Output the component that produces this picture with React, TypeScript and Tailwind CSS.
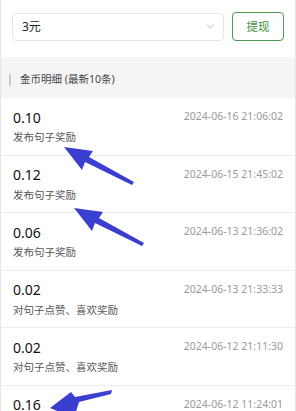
import { ChevronDown } from "lucide-react";

type Record = {
  amount: string;
  time: string;
  desc: string;
};

const records: Record[] = [
  { amount: "0.10", time: "2024-06-16 21:06:02", desc: "发布句子奖励" },
  { amount: "0.12", time: "2024-06-15 21:45:02", desc: "发布句子奖励" },
  { amount: "0.06", time: "2024-06-13 21:36:02", desc: "发布句子奖励" },
  { amount: "0.02", time: "2024-06-13 21:33:33", desc: "对句子点赞、喜欢奖励" },
  { amount: "0.02", time: "2024-06-12 21:11:30", desc: "对句子点赞、喜欢奖励" },
  { amount: "0.16", time: "2024-06-12 11:24:01", desc: "发布句子奖励" },
];

// ── Row ────────────────────────────────────────────────────────────────────
function RecordRow({ data }: { data: Record }) {
  return (
    <div className="h-[57.5px] shrink-0 border-b border-[#ececec] pl-[12px] pr-[12px] pt-[9px]">
      <div className="flex items-center justify-between h-[20px]">
        <span className="text-[14px] text-[#111]">{data.amount}</span>
        <span className="text-[10.5px] text-[#9a9a9a]">{data.time}</span>
      </div>
      <div className="text-[10.5px] text-[#555] leading-[18px] mt-[1px]">{data.desc}</div>
    </div>
  );
}

// ── Annotation arrows ──────────────────────────────────────────────────────
function Arrows() {
  return (
    <svg
      className="absolute inset-0 pointer-events-none"
      width="296"
      height="411"
      viewBox="0 0 296 411"
    >
      <polygon
        fill="#3b3fcf"
        points="63,147 92,151 88,157 133,182 131,185 84,162 81,170"
      />
      <polygon
        fill="#3b3fcf"
        points="73,208 102,212 98,218 143,243 141,246 94,223 91,231"
      />
      <polygon
        fill="#3b3fcf"
        points="49,408 70,392 74,397 111,390 110,394 78,402 73,418"
      />
    </svg>
  );
}

// ── Main ───────────────────────────────────────────────────────────────────
export default function App() {
  return (
    <div
      className="relative w-[296px] h-[411px] overflow-hidden bg-white border-x border-[#e6e6e6]"
      style={{ fontFamily: '"Noto Sans", "Noto Sans CJK SC", sans-serif' }}
    >
      {/* Withdraw bar */}
      <div className="flex items-center gap-[8px] h-[57px] pl-[11px] pr-[11px] pb-[4px]">
        <div className="flex-1 h-[28px] flex items-center justify-between rounded-[4px] border border-[#e6e6e6] pl-[9px] pr-[6px]">
          <span className="text-[12px] text-[#222]">3元</span>
          <ChevronDown size={13} strokeWidth={1.5} className="text-[#aaa]" />
        </div>
        <button className="w-[52px] h-[29px] rounded-[4px] border border-[#4f9a53] text-[11.5px] text-[#3d9444]">
          提现
        </button>
      </div>

      {/* Section header */}
      <div className="h-[41px] bg-[#f5f5f5] flex items-center pl-[8px] pt-[5px]">
        <div className="w-[2px] h-[12px] bg-[#c8c8c8]" />
        <span className="ml-[9px] text-[10.5px] text-[#444]">金币明细 (最新10条)</span>
      </div>

      {/* List */}
      <div className="flex flex-col">
        {records.map((r, i) => (
          <RecordRow key={i} data={r} />
        ))}
      </div>

      <Arrows />
    </div>
  );
}
